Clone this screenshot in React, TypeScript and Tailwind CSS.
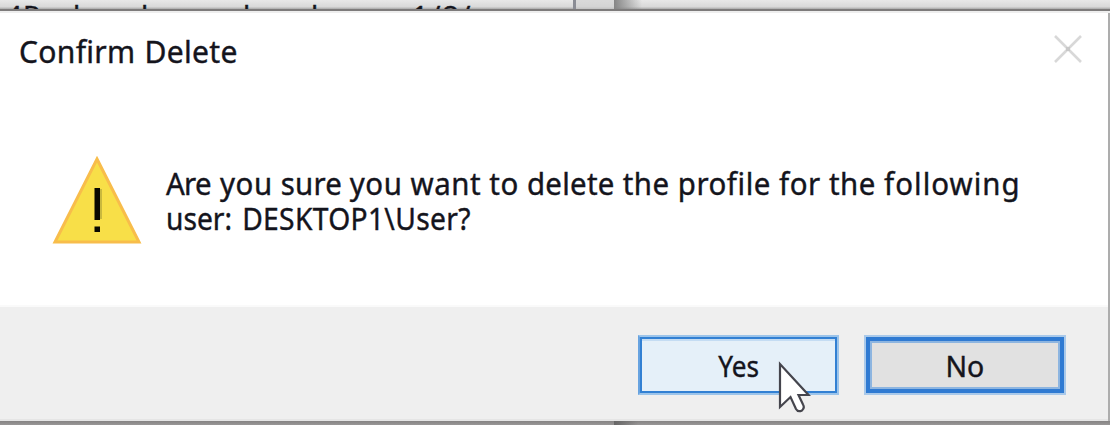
import React from "react";

const fragments = [
  { x: 6, text: "4" },
  { x: 23, text: "P" },
  { x: 73, text: "l" },
  { x: 141, text: "l" },
  { x: 243, text: "l" },
  { x: 311, text: "l" },
  { x: 412, text: "1" },
  { x: 430, text: "/" },
  { x: 443, text: "2" },
  { x: 460, text: "/" },
];

function WarningIcon() {
  return (
    <svg className="h-[92px] w-[92px] shrink-0" viewBox="0 0 92 92">
      <path d="M46 4 L88 87 H4 Z" fill="#f8df48" stroke="#f8bd4b" strokeWidth="3" />
      <path d="M49 34h2v30H49z" fill="#c9b83e" />
      <path d="M43.5 33h5.5v32h-5.5zM43.5 71.500h5.500v5.500h-5.500z" fill="#080800" />
    </svg>
  );
}

function Cursor() {
  return (
    <svg className="absolute left-[137px] top-[22px] h-[54px] w-[36px]" viewBox="0 0 36 54">
      <path
        d="M3 5 V48 L13.500 38 L19 50 Q21 53.500 25 51.500 Q28 49 26 45.500 L21.500 36 H31.500 Z"
        fill="#fff"
        stroke="#45454d"
        strokeWidth="2.2"
      />
    </svg>
  );
}

export default function App() {
  return (
    <div className="flex h-[425px] w-[1110px] flex-col overflow-hidden bg-white font-['Noto_Sans','Open_Sans',sans-serif] text-[#14141c] [-webkit-text-stroke:0.4px_#14141c] [font-variant-ligatures:none]">
      <div className="relative flex h-[11px] shrink-0 overflow-hidden border-b-2 border-[#7d7b7b] bg-linear-to-b from-[#e8e8e8] via-[#d9d9d9] via-75% to-[#a9a9a9]">
        <div className="w-[573px]" />
        <div className="w-[3px] bg-[#8a8c94]" />
        <div className="w-[38px] bg-[#d0d0d0]/60" />
        <div className="w-[28px] bg-linear-to-r from-[#858585] to-transparent" />
        {fragments.map((f) => (
          <span key={f.x} className="absolute top-0 text-[28px] leading-[30px]" style={{ left: f.x }}>
            {f.text}
          </span>
        ))}
      </div>
      <div className="h-[2px] shrink-0 bg-[#eeeeee]" />

      <main className="flex h-[408px] shrink-0 flex-col border-r-2 border-[#adadad]">
        <header className="flex h-[76px] items-start justify-between pl-[19px] pr-[26px]">
          <h1 className="origin-left scale-x-[0.97] whitespace-nowrap pt-[17px] text-[31px] leading-[42px] tracking-[0.3px]">
            Confirm <span className="ml-px">Delete</span>
          </h1>
          <svg className="mt-[22px] h-[28px] w-[28px]" viewBox="0 0 28 28">
            <path d="M1 1L27 27M27 1L1 27" stroke="#d8d8d8" strokeWidth="2.6" />
            <rect x="12" y="12" width="4" height="4" fill="#c8c8c8" />
          </svg>
        </header>
        <section className="flex h-[218px] border-b-2 border-[#fafafa] pl-[51px] pt-[66px]">
          <WarningIcon />
          <div className="ml-[23px] pt-[11px] text-[30px] leading-[35px]">
            <p className="w-max origin-left scale-x-[0.98] whitespace-nowrap tracking-[0.55px]">
              <span className="tracking-[-0.7px]">Are</span>
              <span className="ml-px"> you </span>
              <span className="tracking-[0.2px]">sure </span>
              <span>you want to </span>
              <span className="tracking-[0.3px]">delete </span>
              <span>the profile for the </span>
              <span className="tracking-[1.05px]">following</span>
            </p>
            <p className="w-max origin-left scale-x-[0.94] whitespace-nowrap">
              user: <span className="ml-[3px] tracking-[0.35px]">DESKTOP1\User?</span>
            </p>
          </div>
        </section>
        <footer className="flex h-[114px] justify-end gap-[25px] border-b-2 border-b-[#e5e5e5] bg-[#efefef] pr-[42px] pt-[28px]">
          <button className="relative h-[60px] w-[201px] border-2 border-[#9cc4ea] border-l-[#68a3e0] bg-[#e5f0f9] text-[29px] leading-[57px] shadow-[inset_0_0_0_2px_#3280d3,inset_0_4px_0_0_#c4dcf3]">
            <span className="inline-block scale-x-[0.9]">Yes</span>
            <Cursor />
          </button>
          <button className="h-[60px] w-[202px] border-2 border-[#a9c9ea] bg-[#e1e1e1] text-[29px] leading-[57px] shadow-[inset_0_0_0_4px_#2f7ad2,inset_0_0_0_6px_#8db5e0]">
            <span className="inline-block scale-x-[0.98]">No</span>
          </button>
        </footer>
      </main>

      <div className="flex h-[4px] shrink-0 bg-linear-to-b from-[#858383] to-[#999797]">
        <div className="w-[614px]" />
        <div className="w-[24px] bg-linear-to-r from-[#666666] to-transparent" />
      </div>
    </div>
  );
}
